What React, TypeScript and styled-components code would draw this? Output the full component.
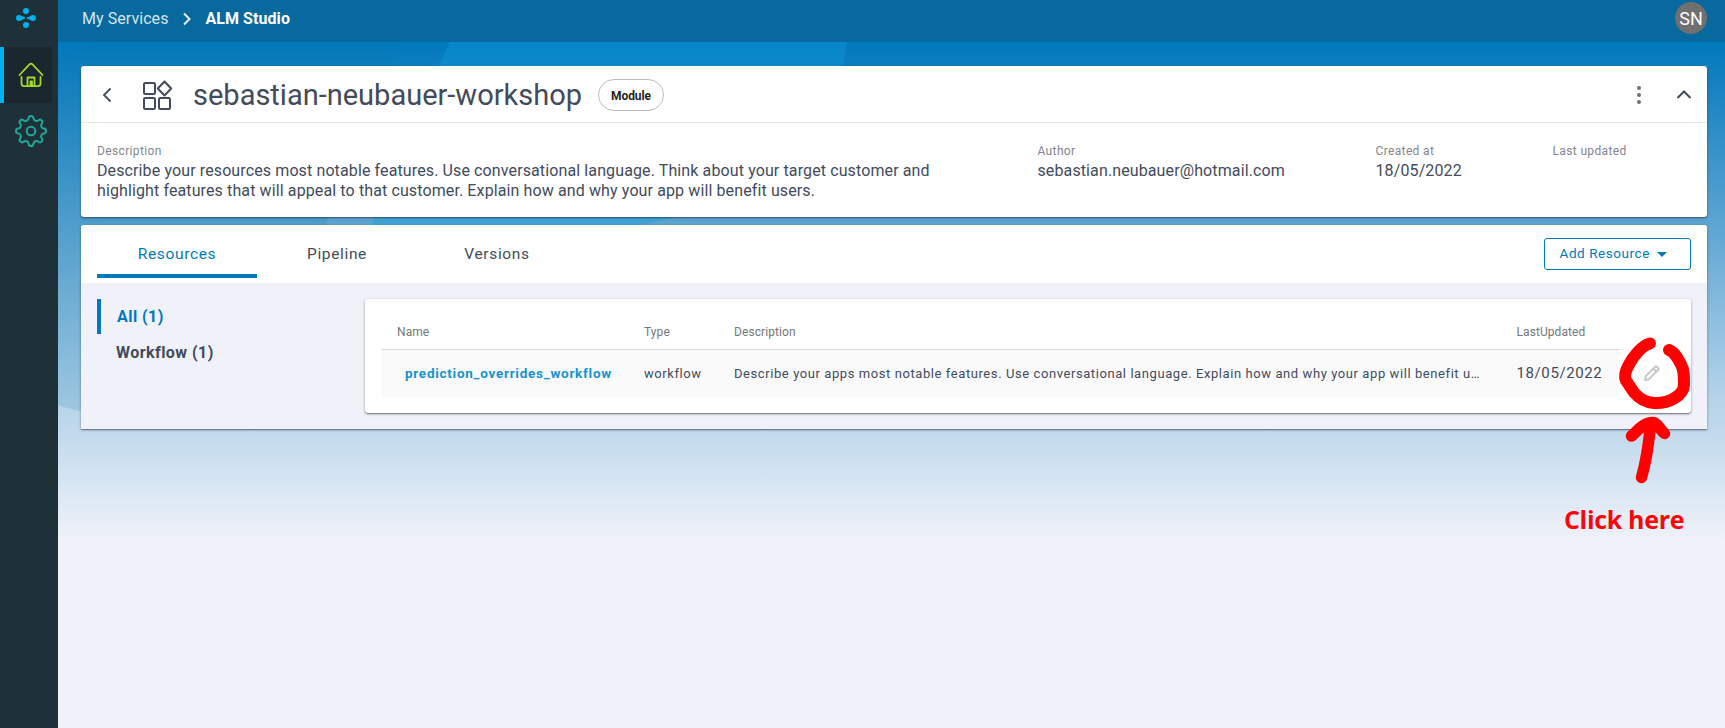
import React from "react";
import styled, { createGlobalStyle, css } from "styled-components";

const Global = createGlobalStyle`
  * { box-sizing: border-box; }
  body { margin: 0; font-family: Roboto, "Liberation Sans", sans-serif; color: #424b5c; }
  h1, p { margin: 0; }
  button { font: inherit; background: none; border: 0; padding: 0; color: inherit; }
`;

const Shell = styled.div`
  position: relative;
  display: flex;
  width: 1725px;
  height: 728px;
  overflow: hidden;
  background: #f0f1f9;
`;
const Sidebar = styled.nav`
  width: 58px;
  flex: none;
  background: #1e3138;
  display: flex;
  flex-direction: column;
`;
const Logo = styled.div`
  height: 47px;
  padding: 8px 0 0 16px;
  svg { display: block; }
`;
const NavItem = styled.a<{ $active?: boolean }>`
  display: flex;
  align-items: center;
  justify-content: center;
  height: 56px;
  width: 52px;
  border-left: 4px solid transparent;
  padding-left: 6px;
  ${(p) => p.$active && css`background: #1a272e; border-left-color: #00b0f0;`}
  svg { display: block; flex: none; }
`;
const Main = styled.div`
  flex: 1;
  position: relative;
  display: flex;
  flex-direction: column;
`;
const Backdrop = styled.svg`
  position: absolute;
  inset: 0;
`;
const TopBar = styled.header`
  position: relative;
  height: 42px;
  flex: none;
  background: #07699d;
  display: flex;
  align-items: center;
  padding: 0 18px 5px 24px;
`;
const Crumb = styled.span<{ $current?: boolean }>`
  font-size: 16px;
  line-height: 20px;
  letter-spacing: 0.06px;
  font-weight: ${(p) => (p.$current ? 700 : 400)};
  color: ${(p) => (p.$current ? "#fff" : "#d3e6f0")};
`;
const CrumbArrow = styled.svg`
  margin: 0 14px 0 15px;
`;
const Avatar = styled.div`
  width: 32px;
  height: 32px;
  border-radius: 50%;
  margin: -1px 0 0 auto;
  background: #707070;
  color: #fff;
  font-size: 18px;
  display: grid;
  place-items: center;
`;
const Content = styled.main`
  position: relative;
  display: flex;
  flex-direction: column;
  gap: 8px;
  padding: 24px 18px 0 23px;
`;
const Card = styled.section`
  border-radius: 3px;
  background: #fff;
  box-shadow: 0 1px 1px rgba(30, 40, 50, 0.4), 0 1px 3px rgba(30, 40, 50, 0.35);
`;
const SummaryCard = styled(Card)`height: 151px;`;
const TitleRow = styled.div`
  height: 57px;
  border-bottom: 1px solid #e6e7e9;
  display: flex;
  align-items: center;
  padding: 2px 15px 0 20px;
`;
const IconButton = styled.button`
  display: flex;
`;
const ModuleIcon = styled.svg`margin: 0 20px 0 29px;`;
const Title = styled.h1`
  font-size: 29px;
  line-height: 40px;
  font-weight: 400;
  color: #424b5c;
`;
const Tag = styled.span`
  margin-left: 16px;
  width: 66px;
  height: 32px;
  border: 1px solid #bdbdbd;
  border-radius: 16px;
  display: grid;
  place-items: center;
  padding-top: 2px;
  color: #1f1f1f;
  font-size: 12px;
  letter-spacing: -0.1px;
  font-weight: 700;
`;
const TitleActions = styled.div`
  margin-left: auto;
  display: flex;
  align-items: center;
  gap: 35px;
`;
const Details = styled.div`
  display: grid;
  grid-template-columns: 940.5px 338px 177px 1fr;
  padding: 20px 0 0 16px;
`;
const FieldLabel = styled.div`
  font-size: 12px;
  line-height: 16px;
  letter-spacing: 0.36px;
  color: #83868f;
`;
const FieldValue = styled.p`
  margin-top: 2px;
  font-size: 16px;
  line-height: 20px;
  letter-spacing: 0.115px;
  white-space: nowrap;
`;
const ResourceCard = styled(Card)`
  height: 204px;
  background: #f0f1f9;
  border-radius: 3px 3px 0 0;
`;
const TabBar = styled.div`
  height: 58px;
  padding: 0 16px;
  background: #fff;
  border-radius: 3px 3px 0 0;
  display: flex;
`;
const Tab = styled.button<{ $active?: boolean }>`
  width: 160px;
  height: 53px;
  padding-top: 8px;
  font-size: 15.5px;
  letter-spacing: 0.65px;
  border-bottom: 4px solid ${(p) => (p.$active ? "#0079bd" : "transparent")};
  color: ${(p) => (p.$active ? "#0079bd" : "#424b5c")};
`;
const AddButton = styled.button`
  margin: 13px 0 0 auto;
  width: 147px;
  height: 32px;
  border: 1px solid #0079bd;
  border-radius: 3px;
  display: flex;
  align-items: center;
  padding: 0 0 2px 14.5px;
  gap: 7.5px;
  font-size: 13.5px;
  letter-spacing: 0.57px;
  color: #0079bd;
  svg { margin-top: 3px; }
`;
const ResourceBody = styled.div`
  display: flex;
  padding: 16px;
`;
const Filters = styled.div`
  width: 268px;
  display: flex;
  flex-direction: column;
  gap: 1px;
`;
const Filter = styled.a<{ $active?: boolean }>`
  height: 35px;
  padding-left: ${(p) => (p.$active ? "16px" : "15px")};
  border-left: 4px solid ${(p) => (p.$active ? "#0079bd" : "transparent")};
  display: flex;
  align-items: center;
  font-size: 16px;
  font-weight: 700;
  letter-spacing: 0.45px;
  color: ${(p) => (p.$active ? "#0079bd" : "#424b5c")};
`;
const TablePanel = styled(Card)`
  width: 1326px;
  height: 114px;
  padding: 16px 16px 0;
`;
const Row = styled.div`
  display: grid;
  grid-template-columns: 247px 90px 782.5px 117.5px 57px;
  align-items: center;
`;
const HeadRow = styled(Row)`
  height: 34px;
  padding-bottom: 1px;
  font-size: 12px;
  letter-spacing: 0.08px;
  color: #75777b;
`;
const BodyRow = styled(Row)`
  height: 48px;
  padding-bottom: 1px;
  background: linear-gradient(to right, #fafafb 1237px, #fff 1237px);
  border-top: 1px solid;
  border-image: linear-gradient(to right, #dadadb 1237px, #f2f2f2 1237px) 1;
`;
const Cell = styled.div`
  padding-left: 16px;
  font-size: 13px;
  letter-spacing: 0.58px;
  white-space: nowrap;
`;
const HeadCell = styled.div`padding-left: 16px;`;
const NameCell = styled(Cell)`
  padding-left: 24px;
  font-size: 13.5px;
  font-weight: 700;
  letter-spacing: 0.73px;
  color: #1494d0;
`;
const DateCell = styled(Cell)`
  font-size: 15px;
  letter-spacing: 0.6px;
`;
const EditCell = styled.div`
  display: flex;
  padding-left: 26px;
`;
const Annotation = styled.svg`
  position: absolute;
  left: 1600px;
  top: 330px;
`;
const Callout = styled.div`
  position: absolute;
  left: 1564px;
  top: 501px;
  color: #fb0508;
  font: 700 25px/36px "Open Sans", sans-serif;
  letter-spacing: -0.32px;
  white-space: nowrap;
`;

export default function App() {
  return (
    <>
      <Global />
      <Shell>
        <Sidebar>
          <Logo>
            <svg width="20" height="20" viewBox="0 0 20 20" fill="#00b0f0">
              <circle cx="10" cy="3" r="3" /><circle cx="10" cy="17" r="3" />
              <path d="M3 7c2 0 3 1.8 6 2.3v1.4C6 11.2 5 13 3 13a3 3 0 0 1 0-6ZM17 7c-2 0-3 1.8-6 2.3v1.4c3 .5 4 2.3 6 2.3a3 3 0 0 0 0-6Z" />
            </svg>
          </Logo>
          <NavItem $active>
            <svg width="26" height="26" viewBox="0 0 26 26" fill="none" stroke="#a4d92b" strokeWidth="1.8" strokeLinecap="round" strokeLinejoin="round">
              <path d="M1.500 13 11.700 2.200q1.300-1 2.600 0L24.500 13" />
              <path d="M3.500 15v6.500q0 2.700 2.700 2.700h13.600q2.700 0 2.700-2.700V15M9.500 24v-8.500h7V24M12.500 24v-4.500h1.500V24" />
            </svg>
          </NavItem>
          <NavItem>
            <svg width="32" height="32" viewBox="0 0 32 32" fill="none" stroke="#22a699" strokeWidth="2" strokeLinejoin="round">
              <circle cx="16" cy="16" r="4.300" />
              <path d="M13.600 3.200Q13.800 1 16 1t2.400 2.200c.2 2.600 3.300 3.600 5.100 2q1.700-1.300 3.200.2t.1 3.200c-1.500 2-.3 4.800 2.100 5Q31 13.800 31 16t-2.100 2.400c-2.400.2-3.600 3-2.100 5q1.400 1.700-.1 3.200t-3.200.2c-1.800-1.600-4.900-.6-5.100 2Q18.200 31 16 31t-2.400-2.200c-.2-2.600-3.300-3.600-5.100-2q-1.700 1.300-3.200-.2t-.1-3.200c1.500-2 .3-4.800-2.100-5Q1 18.200 1 16t2.100-2.400c2.400-.2 3.600-3 2.100-5q-1.400-1.700.1-3.200t3.200-.2c1.800 1.600 4.900.6 5.100-2Z" />
            </svg>
          </NavItem>
        </Sidebar>
        <Main>
          <Backdrop width="1667" height="728" viewBox="58 0 1667 728">
            <defs>
              <linearGradient id="sky" x1="0" y1="42" x2="0" y2="540" gradientUnits="userSpaceOnUse">
                <stop offset="0" stopColor="#0079bd" />
                <stop offset=".08" stopColor="#1581c1" />
                <stop offset=".36" stopColor="#5ba4d2" />
                <stop offset=".72" stopColor="#b6d4ea" />
                <stop offset=".77" stopColor="#bfd8eb" />
                <stop offset=".93" stopColor="#e0eaf5" />
                <stop offset="1" stopColor="#f0f1f9" />
              </linearGradient>
            </defs>
            <path d="M58 42h1667v498H58z" fill="url(#sky)" />
            <path d="M58 56Q75 46 105 42h294l-73 183H81v186.500L58 405.500Z" fill="#0a75a8" fillOpacity=".16" />
            <path d="M449.500 42H847l-4 24C825 150 750 205 640 225H371L438.700 66Z" fill="#12a0df" fillOpacity=".35" />
          </Backdrop>
          <TopBar>
            <Crumb>My Services</Crumb>
            <CrumbArrow width="8" height="14" viewBox="0 0 8 14" fill="none" stroke="#e8f2f7" strokeWidth="2"><path d="m1 1.500 5.500 5.500L1 12.500" /></CrumbArrow>
            <Crumb $current>ALM Studio</Crumb>
            <Avatar>SN</Avatar>
          </TopBar>
          <Content>
            <SummaryCard>
              <TitleRow>
                <IconButton aria-label="Back">
                  <svg width="12" height="16" viewBox="0 0 12 16" fill="none" stroke="#424b5c" strokeWidth="1.800"><path d="M9.500 1.500 3 8l6.500 6.500" /></svg>
                </IconButton>
                <ModuleIcon width="31" height="30" viewBox="0 0 31 30" fill="none" stroke="#424b5c" strokeWidth="2">
                  <rect x="2" y="3" width="11" height="11" rx="1.300" />
                  <rect x="2" y="18" width="11" height="11" rx="1.300" />
                  <rect x="17" y="18" width="11" height="11" rx="1.300" />
                  <path d="m22.500 1.500 6.700 7-6.700 7-6.700-7Z" strokeLinejoin="round" />
                </ModuleIcon>
                <Title>sebastian-neubauer-workshop</Title>
                <Tag>Module</Tag>
                <TitleActions>
                  <IconButton aria-label="More">
                    <svg width="4" height="18" viewBox="0 0 4 18" fill="#707070"><circle cx="2" cy="2" r="2" /><circle cx="2" cy="9" r="2" /><circle cx="2" cy="16" r="2" /></svg>
                  </IconButton>
                  <IconButton aria-label="Collapse">
                    <svg width="16" height="10" viewBox="0 0 16 10" fill="none" stroke="#424b5c" strokeWidth="2"><path d="m1.500 8 6.500-6.500 6.500 6.500" /></svg>
                  </IconButton>
                </TitleActions>
              </TitleRow>
              <Details>
                <div>
                  <FieldLabel>Description</FieldLabel>
                  <FieldValue>
                    Describe your resources most notable features. Use conversational language. Think about your target customer and
                    <br />
                    highlight features that will appeal to that customer. Explain how and why your app will benefit users.
                  </FieldValue>
                </div>
                <div>
                  <FieldLabel>Author</FieldLabel>
                  <FieldValue>sebastian.neubauer@hotmail.com</FieldValue>
                </div>
                <div>
                  <FieldLabel>Created at</FieldLabel>
                  <FieldValue>18/05/2022</FieldValue>
                </div>
                <FieldLabel>Last updated</FieldLabel>
              </Details>
            </SummaryCard>
            <ResourceCard>
              <TabBar>
                <Tab $active>Resources</Tab>
                <Tab>Pipeline</Tab>
                <Tab>Versions</Tab>
                <AddButton>
                  Add Resource
                  <svg width="10" height="5" viewBox="0 0 10 5" fill="currentColor"><path d="M0 0h10L5 5Z" /></svg>
                </AddButton>
              </TabBar>
              <ResourceBody>
                <Filters>
                  <Filter $active>All (1)</Filter>
                  <Filter>Workflow (1)</Filter>
                </Filters>
                <TablePanel>
                  <HeadRow>
                    <HeadCell>Name</HeadCell>
                    <HeadCell>Type</HeadCell>
                    <HeadCell>Description</HeadCell>
                    <HeadCell>LastUpdated</HeadCell>
                  </HeadRow>
                  <BodyRow>
                    <NameCell>prediction_overrides_workflow</NameCell>
                    <Cell>workflow</Cell>
                    <Cell>Describe your apps most notable features. Use conversational language. Explain how and why your app will benefit u…</Cell>
                    <DateCell>18/05/2022</DateCell>
                    <EditCell>
                      <svg width="16" height="16" viewBox="0 0 16 16" fill="none" stroke="#c6c6c6" strokeWidth="1.900" strokeLinejoin="round">
                        <path d="m1 15 .8-4L11 1.800q1-1 2 0l1.200 1.200q1 1 0 2L5 14.200ZM9.300 3.500l3.200 3.200" />
                      </svg>
                    </EditCell>
                  </BodyRow>
                </TablePanel>
              </ResourceBody>
            </ResourceCard>
          </Content>
        </Main>
        <Annotation width="110" height="160" viewBox="1600 330 110 160" fill="none" stroke="#f00" strokeLinecap="round" strokeLinejoin="round">
          <path strokeWidth="12" d="M1650 343.500c-8 2-17 13-21 21-4 7-5 12-3 16l8 12c5 6 13 10 20 10.500 8 .5 14-1 20-4.500 7-4 10-8 10-14 0-8 0-15-3-20-3-6-6-12-12-14.500" />
          <path strokeWidth="11.500" d="M1641.500 477.500c4-14 7-30 9-53M1631.500 436c6-5 12-13.500 21-13.500 5 0 8 8 12 11" />
        </Annotation>
        <Callout>Click here</Callout>
      </Shell>
    </>
  );
}
